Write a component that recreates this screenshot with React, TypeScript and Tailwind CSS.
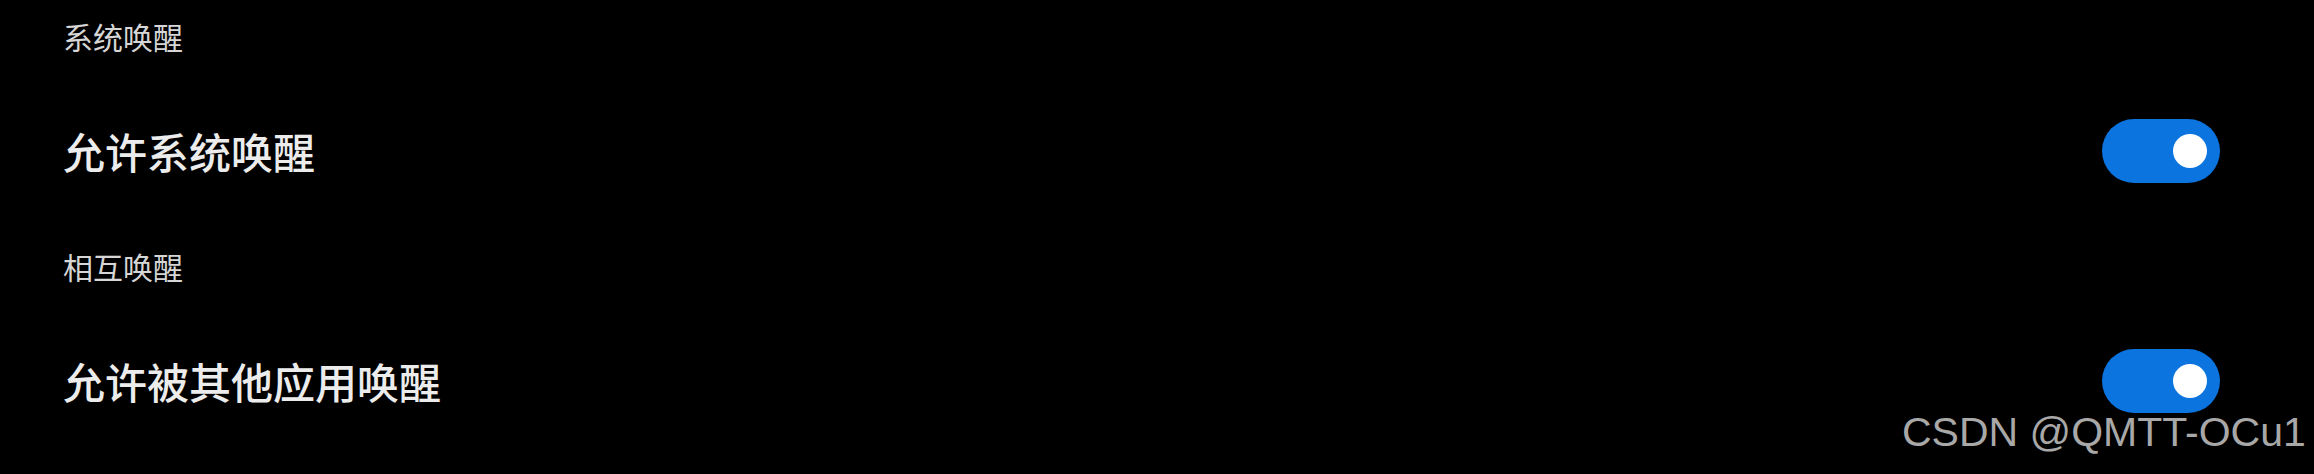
import React from 'react'

interface WakeSection {
  key: string
  title: string
  label: string
  enabled: boolean
}

const sections: WakeSection[] = [
  { key: 'system', title: '系统唤醒', label: '允许系统唤醒', enabled: true },
  { key: 'mutual', title: '相互唤醒', label: '允许被其他应用唤醒', enabled: true },
]

const cjk = { fontFamily: '"Noto Sans CJK SC", "Noto Sans", sans-serif' }

function Toggle({ on }: { on: boolean }) {
  return (
    <div
      className={`flex h-[64px] w-[118px] shrink-0 items-center rounded-full px-[13px] ${
        on ? 'justify-end bg-[#0b74de]' : 'justify-start bg-[#3a3a3a]'
      }`}
    >
      <span className="block h-[34px] w-[34px] rounded-full bg-white" />
    </div>
  )
}

export default function App() {
  return (
    <div className="relative h-[474px] w-full overflow-hidden bg-black" style={cjk}>
      <div className="flex flex-col pl-[63px] pr-[94px]">
        {sections.map(s => (
          <div key={s.key} className="flex flex-col">
            {/* Group caption */}
            <div className="flex h-[72px] items-center text-[30px] leading-none text-[#d6d6d6]">
              {s.title}
            </div>
            {/* Switch row */}
            <div className="flex h-[158px] items-center justify-between">
              <span className="text-[42px] font-medium leading-none text-[#ececec]">{s.label}</span>
              <Toggle on={s.enabled} />
            </div>
          </div>
        ))}
      </div>

      {/* Watermark */}
      <div
        className="absolute left-[1902px] top-[412px] whitespace-nowrap text-[41px] leading-[41px] text-[#a8a8a8]"
        style={{ fontFamily: '"Liberation Sans", Arial, sans-serif' }}
      >
        CSDN @QMTT-OCu1
      </div>
    </div>
  )
}
